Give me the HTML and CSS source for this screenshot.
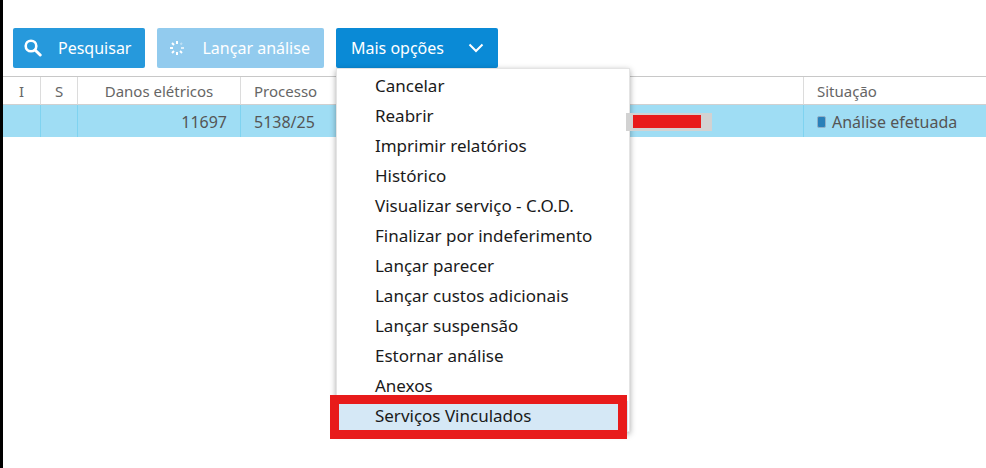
FILE: index.html
```
<!DOCTYPE html>
<html lang="pt-BR">
<head>
    <title>Danos elétricos</title>
    <meta charset="utf-8">
    <meta name="viewport" content="width=device-width, initial-scale=1">
    <link rel="stylesheet" href="styles.css">
</head>
<body>
    <div class="toolbar">
        <button type="button" class="btn">
            <svg class="icon-search" viewBox="0 0 18 18" width="18" height="18">
                <circle cx="7" cy="7" r="5.3" fill="none" stroke="#fff" stroke-width="2.6"/>
                <path d="M11 11l5.2 5" stroke="#fff" stroke-width="3" stroke-linecap="round"/>
            </svg>
            Pesquisar
        </button>
        <button type="button" class="btn btn-analysis" disabled>
            <svg class="icon-spinner" viewBox="0 0 16 16" width="16" height="16">
                <g stroke="#fff" stroke-width="2">
                    <path d="M8 1v3"/>
                    <path d="M13 3l-1.500 1.500" opacity=".4"/>
                    <path d="M15 8h-3" opacity=".7"/>
                    <path d="M13 13l-2-2"/>
                    <path d="M8 15v-3"/>
                    <path d="M3 13l2-2"/>
                    <path d="M1 8h3"/>
                    <path d="M3 3l2 2"/>
                </g>
            </svg>
            Lançar análise
        </button>
        <div class="dropdown">
            <button type="button" class="btn btn-more" aria-expanded="true">
                Mais opções
                <svg viewBox="0 0 16 10" width="16" height="10">
                    <path d="M1.500 1.500L8 8l6.500-6.500" fill="none" stroke="#fff" stroke-width="2"/>
                </svg>
            </button>
            <ul class="menu">
                <li><button type="button" class="menu-item">Cancelar</button></li>
                <li><button type="button" class="menu-item">Reabrir</button></li>
                <li><button type="button" class="menu-item">Imprimir relatórios</button></li>
                <li><button type="button" class="menu-item">Histórico</button></li>
                <li><button type="button" class="menu-item">Visualizar serviço - C.O.D.</button></li>
                <li><button type="button" class="menu-item">Finalizar por indeferimento</button></li>
                <li><button type="button" class="menu-item">Lançar parecer</button></li>
                <li><button type="button" class="menu-item">Lançar custos adicionais</button></li>
                <li><button type="button" class="menu-item">Lançar suspensão</button></li>
                <li><button type="button" class="menu-item">Estornar análise</button></li>
                <li><button type="button" class="menu-item">Anexos</button></li>
                <li class="marked"><button type="button" class="menu-item active">Serviços Vinculados</button></li>
            </ul>
        </div>
    </div>

    <table class="grid">
        <colgroup>
            <col class="col-info">
            <col class="col-flag">
            <col class="col-damage">
            <col class="col-process">
            <col class="col-detail">
            <col>
            <col class="col-status">
        </colgroup>
        <thead>
            <tr>
                <th class="center">I</th>
                <th class="center">S</th>
                <th class="center">Danos elétricos</th>
                <th>Processo</th>
                <th></th>
                <th></th>
                <th>Situação</th>
            </tr>
        </thead>
        <tbody>
            <tr>
                <td></td>
                <td></td>
                <td class="number">11697</td>
                <td>5138/25</td>
                <td></td>
                <td><div class="redacted"></div></td>
                <td><div class="status"><span class="status-dot"></span>Análise efetuada</div></td>
            </tr>
        </tbody>
    </table>
</body>
</html>
```

FILE: styles.css
```
* {
    box-sizing: border-box;
}
body {
    font-family: "Noto Sans", "Open Sans", sans-serif;
    margin: 0;
    min-height: 100vh;
    padding-top: 28px;
    border-left: 3px solid #000;
    background-color: #fff;
}
.toolbar {
    display: flex;
    gap: 12px;
    padding: 0 10px 8px;
}
.btn {
    display: flex;
    align-items: center;
    gap: 16px;
    height: 40px;
    padding: 0 14px 0 11px;
    border: none;
    border-radius: 2px;
    background-color: #2699dc;
    color: #fff;
    font-family: inherit;
    font-size: 16px;
    white-space: nowrap;
    cursor: pointer;
}
.btn-analysis {
    gap: 17px;
    padding: 0 14px 0 12px;
    background-color: #92cbee;
    cursor: default;
}
.btn-more {
    gap: 24px;
    padding: 0 14px 0 15px;
    background-color: #0a8ad6;
}
.dropdown {
    position: relative;
}
.menu {
    position: absolute;
    top: 40px;
    left: 0;
    z-index: 1;
    width: 294px;
    margin: 0;
    padding: 2px 1px 0;
    border: 1px solid #e4e4e4;
    background-color: #fff;
    box-shadow: 0 2px 6px rgba(0,0,0,0.35);
    list-style: none;
}
.menu-item {
    display: block;
    width: 100%;
    height: 30px;
    padding: 0 20px 2px 37px;
    border: none;
    background-color: #fff;
    color: #1a1a1a;
    font-family: inherit;
    font-size: 17px;
    text-align: left;
    white-space: nowrap;
    cursor: pointer;
}
.menu-item.active {
    background-color: #d5e8f6;
}
.marked {
    position: relative;
}
.marked::after {
    content: "";
    position: absolute;
    top: -6px;
    right: 1px;
    bottom: -8px;
    left: -8px;
    border: 9px solid #e81b1b;
    pointer-events: none;
}
.grid {
    width: 100%;
    table-layout: fixed;
    border-spacing: 0;
    border-top: 1px solid #c8c8c8;
}
.col-info {
    width: 38px;
}
.col-flag {
    width: 37px;
}
.col-damage {
    width: 163px;
}
.col-process {
    width: 96px;
}
.col-detail {
    width: 286px;
}
.col-status {
    width: 182px;
}
.grid th {
    height: 28px;
    padding: 0 13px;
    border-right: 1px solid #dcdcdc;
    border-bottom: 1px solid #d0d0d0;
    color: #666;
    font-size: 15px;
    font-weight: normal;
    text-align: left;
}
.grid td {
    height: 32px;
    padding: 2px 13px 0;
    border-right: 1px solid #7fd3f0;
    background-color: #9fddf4;
    color: #555;
    font-size: 16px;
}
.grid th.center {
    padding: 0;
    text-align: center;
}
.grid td.number {
    text-align: right;
}
.grid th:nth-child(5),
.grid td:nth-child(5),
.grid th:last-child,
.grid td:last-child {
    border-right: none;
}
.grid td:nth-child(6) {
    padding: 2px 3px 0;
}
.redacted {
    position: relative;
    z-index: 2;
    width: 86px;
    height: 18px;
    padding: 2px 11px 3px 7px;
    background-color: #d2d2d2;
}
.redacted::before {
    content: "";
    display: block;
    height: 100%;
    background-color: #e81b1b;
}
.status {
    display: flex;
    align-items: center;
    gap: 6px;
    white-space: nowrap;
}
.status-dot {
    width: 9px;
    height: 12px;
    border: 1px solid #8fb0c8;
    border-radius: 2px;
    background-color: #2980b9;
}
```
